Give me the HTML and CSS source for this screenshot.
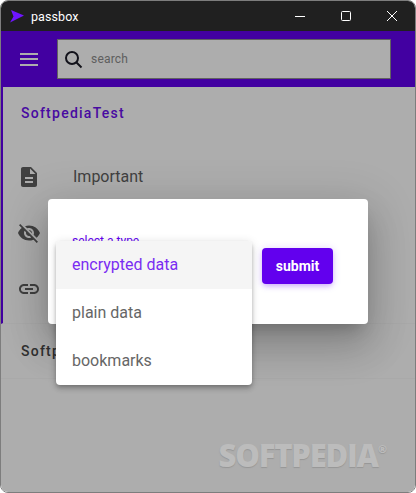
FILE: index.html
```html
<!DOCTYPE html>
<html lang="en">
<head>
    <meta charset="UTF-8">
    <meta name="viewport" content="width=device-width, initial-scale=1.0">
    <title>passbox</title>
    <link rel="stylesheet" href="styles.css">
</head>
<body>
    <div class="window">
        <div class="titlebar">
            <svg class="logo" width="14" height="13" viewBox="0 0 14 13"><path d="M1 0l13 5.5L0 12.5l3.5-6z" fill="#6f14ff"/></svg>
            <span class="app-name">passbox</span>
            <div class="win-buttons">
                <svg width="12" height="12" viewBox="0 0 12 12"><path d="M1 6.5h10" stroke="#fff" fill="none"/></svg>
                <svg width="12" height="12" viewBox="0 0 12 12"><rect x="1.5" y="1.5" width="9" height="9" rx="1" stroke="#fff" fill="none"/></svg>
                <svg width="12" height="12" viewBox="0 0 12 12"><path d="M1 1l10 10M11 1L1 11" stroke="#fff" fill="none"/></svg>
            </div>
        </div>

        <div class="app">
            <header class="toolbar">
                <button class="menu-btn"><span></span><span></span><span></span></button>
                <div class="search">
                    <svg width="24" height="24" viewBox="0 0 24 24"><circle cx="10" cy="11" r="6" stroke="#1c1c28" stroke-width="2" fill="none"/><path d="M14.5 15.5l5 5" stroke="#1c1c28" stroke-width="2" fill="none"/></svg>
                    <span>search</span>
                </div>
            </header>

            <section class="group active">
                <h2>SoftpediaTest</h2>
                <ul class="items">
                    <li>
                        <svg width="24" height="24" viewBox="0 0 24 24"><path d="M14 2H6c-1.1 0-1.99.9-1.99 2L4 20c0 1.1.89 2 1.99 2H18c1.1 0 2-.9 2-2V8l-6-6zm2 16H8v-2h8v2zm0-4H8v-2h8v2zm-3-5V3.5L18.5 9H13z"/></svg>
                        <span>Important</span>
                    </li>
                    <li>
                        <svg width="24" height="24" viewBox="0 0 24 24"><path d="M12 7c2.76 0 5 2.24 5 5 0 .65-.13 1.26-.36 1.83l2.92 2.92c1.51-1.26 2.7-2.89 3.43-4.75-1.73-4.39-6-7.5-11-7.5-1.4 0-2.74.25-3.98.7l2.16 2.16C10.74 7.13 11.35 7 12 7zM2 4.27l2.28 2.28.46.46C3.08 8.3 1.78 10.02 1 12c1.73 4.39 6 7.5 11 7.5 1.55 0 3.03-.3 4.38-.84l.42.42L19.73 22 21 20.73 3.27 3 2 4.27zM7.53 9.8l1.55 1.55c-.05.21-.08.43-.08.65 0 1.66 1.34 3 3 3 .22 0 .44-.03.65-.08l1.55 1.55c-.67.33-1.41.53-2.2.53-2.76 0-5-2.24-5-5 0-.79.2-1.53.53-2.2zm4.31-.78l3.15 3.15.02-.16c0-1.66-1.34-3-3-3l-.17.01z"/></svg>
                    </li>
                    <li>
                        <svg width="24" height="24" viewBox="0 0 24 24"><path d="M3.9 12c0-1.71 1.39-3.1 3.1-3.1h4V7H7c-2.76 0-5 2.24-5 5s2.24 5 5 5h4v-1.9H7c-1.71 0-3.1-1.39-3.1-3.1zM8 13h8v-2H8v2zm9-6h-4v1.9h4c1.71 0 3.1 1.39 3.1 3.1s-1.39 3.1-3.1 3.1h-4V17h4c2.76 0 5-2.24 5-5s-2.24-5-5-5z"/></svg>
                    </li>
                </ul>
            </section>

            <section class="group">
                <h2>Softp</h2>
            </section>

            <div class="overlay"></div>

            <div class="dialog">
                <label class="type-label">select a type</label>
                <button class="submit">submit</button>
            </div>

            <div class="menu">
                <div class="menu-item selected">encrypted data</div>
                <div class="menu-item">plain data</div>
                <div class="menu-item">bookmarks</div>
            </div>

            <div class="watermark">SOFTPEDIA<sup>®</sup></div>
        </div>
    </div>
</body>
</html>
```

FILE: styles.css
```css
* {
    box-sizing: border-box;
}
html, body {
    height: 100%;
}
body {
    margin: 0;
    background: #fff;
    font-family: Roboto, "Liberation Sans", sans-serif;
    overflow: hidden;
}
.window {
    height: 493px;
    display: flex;
    flex-direction: column;
    border: 1px solid #7d7d7d;
    border-radius: 8px;
    overflow: hidden;
}
.titlebar {
    height: 30px;
    flex: none;
    display: flex;
    align-items: center;
    background: #202020;
    color: #fff;
    padding-left: 9px;
}
.logo {
    margin-right: 7px;
}
.app-name {
    font-size: 12.5px;
    letter-spacing: 0.1px;
}
.win-buttons {
    margin-left: auto;
    display: flex;
    gap: 34px;
    padding-right: 17px;
}
.app {
    flex: 1;
    position: relative;
    background: #fff;
}
.toolbar {
    height: 56px;
    display: flex;
    align-items: center;
    background: #6200ee;
    padding-right: 24px;
}
.menu-btn {
    width: 56px;
    height: 40px;
    display: flex;
    flex-direction: column;
    align-items: center;
    justify-content: center;
    gap: 3.5px;
    background: none;
    border: none;
    padding: 0;
}
.menu-btn span {
    width: 18px;
    height: 2px;
    background: #fff;
}
.search {
    flex: 1;
    height: 40px;
    display: flex;
    align-items: center;
    gap: 5px;
    padding-left: 4px;
    background: #fff;
    border: 1px solid #8f8f8f;
    color: #8c8c8c;
    font-size: 12px;
    letter-spacing: 0.2px;
}
.group {
    border-bottom: 1px solid #fafafa;
}
.group.active {
    height: 237px;
    border-left: 2px solid #6200ee;
}
.group h2 {
    margin: 0;
    height: 53px;
    padding: 18px 0 0 18px;
    font-size: 14px;
    line-height: 16px;
    font-weight: 500;
    letter-spacing: 1.25px;
    color: #6a10ee;
}
.group:not(.active) {
    height: 55px;
}
.group:not(.active) h2 {
    padding: 19px 0 0 20px;
    color: #484848;
}
.items {
    list-style: none;
    margin: 9px 0 0;
    padding: 0;
}
.items li {
    height: 56px;
    display: flex;
    align-items: center;
    padding-left: 14px;
    gap: 32px;
    font-size: 16px;
    color: #5f5f5f;
}
.items li span {
    padding-bottom: 2px;
}
.items svg {
    fill: #5f5f5f;
}
.overlay {
    position: absolute;
    inset: 0;
    background: rgba(0, 0, 0, 0.32);
}
.dialog {
    position: absolute;
    left: 47px;
    top: 168px;
    width: 320px;
    height: 125px;
    background: #fff;
    border-radius: 4px;
    box-shadow: 0 11px 15px -7px rgba(0,0,0,.2), 0 24px 38px 3px rgba(0,0,0,.14), 0 9px 46px 8px rgba(0,0,0,.12);
}
.type-label {
    position: absolute;
    left: 24px;
    top: 35px;
    font-size: 12px;
    color: #6200ee;
}
.submit {
    position: absolute;
    left: 214px;
    top: 49px;
    width: 71px;
    height: 36px;
    background: #6200ee;
    color: #fff;
    border: none;
    border-radius: 4px;
    font-family: inherit;
    font-size: 14px;
    font-weight: 700;
    box-shadow: 0 3px 5px -1px rgba(98,0,238,.2), 0 1px 8px rgba(98,0,238,.2);
}
.menu {
    position: absolute;
    left: 55px;
    top: 210px;
    width: 196px;
    background: #fff;
    border-radius: 4px;
    box-shadow: 0 2px 4px -1px rgba(0,0,0,.2), 0 4px 5px rgba(0,0,0,.14), 0 1px 10px rgba(0,0,0,.12);
}
.menu-item {
    height: 48px;
    line-height: 48px;
    padding-left: 16px;
    font-size: 16px;
    color: #666;
}
.menu-item.selected {
    background: #f5f5f5;
    color: #7a2cf2;
    border-radius: 4px 4px 0 0;
}
.watermark {
    position: absolute;
    right: 28px;
    bottom: 19px;
    font-family: "Open Sans", sans-serif;
    font-weight: 800;
    font-size: 31px;
    line-height: 36px;
    letter-spacing: -1.2px;
    color: #bcbcbc;
    text-shadow: 0 1px 1px #969696;
}
.watermark sup {
    font-size: 11px;
    letter-spacing: 0;
    vertical-align: 14px;
    line-height: 0;
}
```
